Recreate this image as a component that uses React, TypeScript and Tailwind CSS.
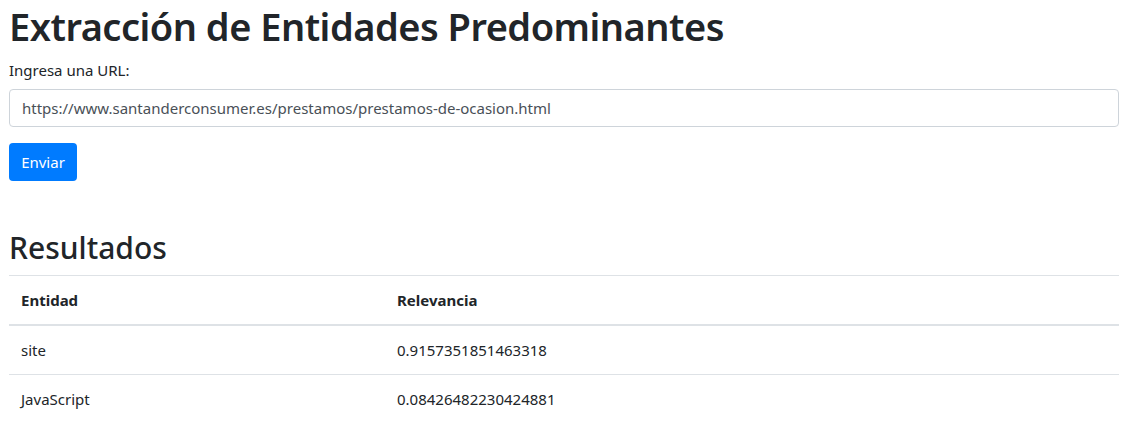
import React from "react";

export default function App() {
  const font = { fontFamily: '"Noto Sans", "Open Sans", sans-serif' };
  return (
    <div className="bg-white min-h-[441px] px-[9px] text-[#212529]" style={font}>
      <h1 className="text-[38px] font-semibold leading-[52px] h-[52px] m-0 mb-[6px] tracking-[-0.5px]">
        Extracción de Entidades Predominantes
      </h1>
      <label className="block text-[15px] leading-[24px] mb-[7px]">Ingresa una URL:</label>
      <input
        className="block w-full h-[38px] px-3 text-[15px] text-[#495057] border border-[#ced4da] rounded-[4px] mb-4 bg-white outline-none"
        defaultValue="https://www.santanderconsumer.es/prestamos/prestamos-de-ocasion.html"
        style={font}
      />
      <button
        className="block h-[38px] w-[68px] text-[15px] text-white bg-[#007bff] rounded-[4px]"
        style={font}
      >
        Enviar
      </button>
      <h2 className="text-[30px] font-medium leading-[38px] h-[38px] mt-[48px] mb-[8px]">Resultados</h2>
      <table className="w-full border-collapse text-[15px]">
        <thead>
          <tr>
            <th className="w-[376px] text-left font-bold px-3 py-3 leading-[24px] border-t border-t-[#dee2e6] border-b-2 border-b-[#dee2e6]">
              Entidad
            </th>
            <th className="text-left font-bold px-3 py-3 leading-[24px] border-t border-t-[#dee2e6] border-b-2 border-b-[#dee2e6]">
              Relevancia
            </th>
          </tr>
        </thead>
        <tbody>
          <tr>
            <td className="px-3 py-3 leading-[24px] border-t border-t-[#dee2e6]">site</td>
            <td className="px-3 py-3 leading-[24px] border-t border-t-[#dee2e6]">0.9157351851463318</td>
          </tr>
          <tr>
            <td className="px-3 py-3 leading-[24px] border-t border-t-[#dee2e6]">JavaScript</td>
            <td className="px-3 py-3 leading-[24px] border-t border-t-[#dee2e6]">0.08426482230424881</td>
          </tr>
        </tbody>
      </table>
    </div>
  );
}
